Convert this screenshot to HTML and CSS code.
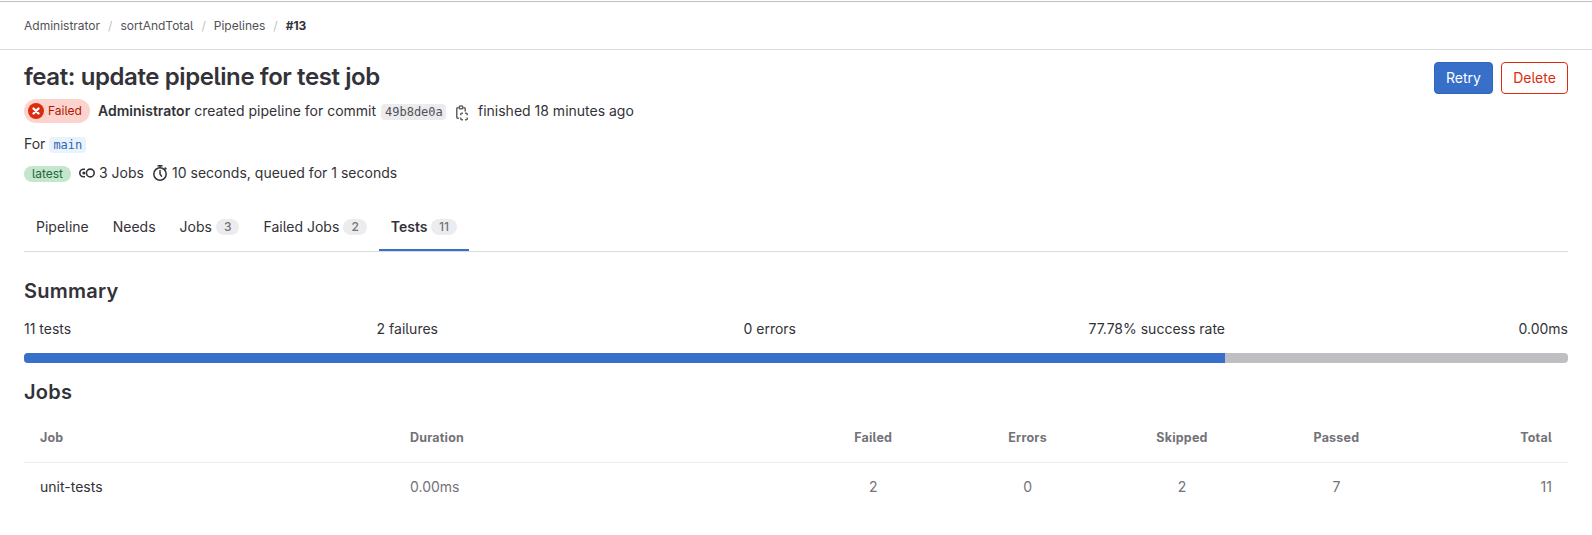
FILE: index.html
```html
<!DOCTYPE html>
<html lang="en">
<head>
<meta charset="utf-8">
<title>Pipeline #13</title>
<link rel="stylesheet" href="styles.css">
</head>
<body>
<nav class="breadcrumbs" aria-label="Breadcrumbs">
  <a class="crumb">Administrator</a><span class="crumb-sep">/</span>
  <a class="crumb">sortAndTotal</a><span class="crumb-sep">/</span>
  <a class="crumb">Pipelines</a><span class="crumb-sep">/</span>
  <a class="crumb crumb-current">#13</a>
</nav>
<main class="page">
  <header class="header">
    <div class="header-info">
      <h1 class="title">feat: update pipeline for test job</h1>
      <div class="line line-status">
        <span class="status"><svg width="16" height="16" viewBox="0 0 16 16"><circle cx="8" cy="8" r="8" fill="#dd2b0e"/><path d="M5.500 5.500l5 5M10.500 5.500l-5 5" stroke="#fff" stroke-width="2.400" stroke-linecap="round"/></svg><span>Failed</span></span>
        <span class="created"><b>Administrator</b> created pipeline for commit</span>
        <code class="sha">49b8de0a</code>
        <svg class="copy" width="16" height="16" viewBox="0 0 16 16" fill="none" stroke="#626168" stroke-width="1.500"><path d="M4.700 2.750H3.750a1 1 0 0 0-1 1v8.500a1 1 0 0 0 1 1H5M9.300 2.750h.950a1 1 0 0 1 1 1V6.500"/><rect x="5.300" y=".9" width="3.400" height="2.800" rx=".8"/><path d="M9 8.250H7.750a1 1 0 0 0-1 1v1M11 8.250h1.250a1 1 0 0 1 1 1v1M6.750 12.500v1.250a1 1 0 0 0 1 1H9M13.250 12.500v1.250a1 1 0 0 1-1 1H11"/></svg>
        <span class="finished">finished 18 minutes ago</span>
      </div>
      <div class="line line-ref"><span>For</span><code class="ref">main</code></div>
      <div class="line line-stats">
        <span class="latest">latest</span>
        <svg class="jobs-icon" width="16" height="16" viewBox="0 0 16 16" fill="none" stroke="#333238" stroke-width="1.600"><path d="M6 4.300H4.500a3.700 3.700 0 0 0 0 7.400H6"/><circle cx="11.300" cy="8" r="3.900"/><circle cx="4.800" cy="8" r="1.500" fill="#333238" stroke="none"/></svg>
        <span class="jobs-count">3 Jobs</span>
        <svg class="timer" width="16" height="16" viewBox="0 0 16 16" fill="none" stroke="#333238" stroke-width="1.500"><circle cx="8" cy="9" r="6.200"/><path d="M8 5.500V9l1.500 2.200" stroke-linecap="round"/><path d="M5.500.800h5M8 .800v2M12.600 2.600l1.800 1.800"/></svg>
        <span class="duration">10 seconds, queued for 1 seconds</span>
      </div>
    </div>
    <div class="actions">
      <button class="btn btn-confirm">Retry</button>
      <button class="btn btn-danger">Delete</button>
    </div>
  </header>
  <div class="tabs" role="tablist">
    <a class="tab">Pipeline</a>
    <a class="tab">Needs</a>
    <a class="tab"><span>Jobs</span><span class="count">3</span></a>
    <a class="tab"><span>Failed Jobs</span><span class="count">2</span></a>
    <a class="tab tab-active"><span>Tests</span><span class="count">11</span></a>
  </div>
  <h2 class="heading heading-summary">Summary</h2>
  <div class="summary">
    <span>11 tests</span><span>2 failures</span><span>0 errors</span><span>77.78% success rate</span><span>0.00ms</span>
  </div>
  <div class="progress"><div class="progress-bar" style="width:77.78%"></div></div>
  <h2 class="heading heading-jobs">Jobs</h2>
  <div class="table">
    <div class="row row-head"><span>Job</span><span>Duration</span><span>Failed</span><span>Errors</span><span>Skipped</span><span>Passed</span><span>Total</span></div>
    <div class="row"><span class="job-name">unit-tests</span><span>0.00ms</span><span>2</span><span>0</span><span>2</span><span>7</span><span>11</span></div>
  </div>
</main>
</body>
</html>
```
FILE: styles.css
```css
* { box-sizing: border-box; }
body { margin: 0; background: #fff; color: #333238; font: 14px/20px Inter, "Liberation Sans", sans-serif; font-feature-settings: "cv05" 1; }
svg { display: block; flex: none; }
.breadcrumbs { display: flex; align-items: center; height: 50px; padding: 2px 24px 0; border-bottom: 1px solid #dcdcde; box-shadow: inset 0 1px #fff, inset 0 2px #bfbfc3; font-size: 12px; line-height: 16px; white-space: nowrap; }
.crumb { color: #535158; }
.crumb-sep { width: 20.4px; text-align: center; color: #bfbfc3; }
.crumb-current { color: #333238; font-weight: 700; letter-spacing: -.1px; }
.page { padding: 0 24px; }
.header { display: flex; justify-content: space-between; }
.header-info { padding-top: 13px; }
.title { margin: 0; font-size: 24px; line-height: 28px; font-weight: 600; letter-spacing: -.41px; white-space: nowrap; }
.line { display: flex; align-items: center; white-space: nowrap; }
.line-status { height: 24px; margin-top: 8px; }
.status { display: flex; align-items: center; gap: 4px; width: 66px; height: 24px; padding: 0 4px; border-radius: 12px; background: #fdd4cd; color: #ae1800; font-size: 12px; }
.created { width: 278px; margin-left: 8px; }
.created b { font-weight: 600; }
code { font: 12px/16px "DejaVu Sans Mono", "Liberation Mono", monospace; height: 16px; border-radius: 4px; padding: 0 4px; }
.sha { width: 65px; margin: 2px 0 0 5px; background: #ececef; color: #535158; }
.copy { margin: 4px 0 0 8px; }
.finished { margin-left: 8px; }
.line-ref { height: 20px; margin-top: 11px; gap: 4px; }
.ref { margin-top: 2px; width: 37px; background: #e9f3fc; color: #2f68b4; }
.line-stats { height: 20px; margin-top: 9px; }
.latest { width: 47px; height: 16px; margin-top: 1px; border-radius: 8px; background: #c3e6cd; color: #24663b; font-size: 12px; line-height: 16px; text-align: center; }
.jobs-icon { margin-left: 8px; }
.jobs-count { width: 44px; margin-left: 4px; }
.timer { margin-left: 9px; }
.duration { margin-left: 4px; letter-spacing: .015px; }
.actions { display: flex; gap: 8px; padding-top: 12px; }
.btn { height: 32px; padding: 0; border-radius: 4px; font: inherit; text-align: center; }
.btn-confirm { width: 59px; border: 1px solid #2f68b4; background: #3870c9; color: #fff; }
.btn-danger { width: 67px; border: 1px solid #dd2b0e; background: #fff; color: #dd2b0e; }
.tabs { display: flex; height: 49px; margin-top: 20px; border-bottom: 1px solid #dcdcde; }
.tab { display: flex; align-items: center; gap: 4px; padding: 0 12px; height: 48px; white-space: nowrap; }
.tab-active { font-weight: 600; box-shadow: inset 0 -2px #3870c9; }
.count { min-width: 23.500px; height: 16px; padding: 0 8px; border-radius: 8px; background: #ececef; color: #737278; font-size: 12px; line-height: 16px; font-weight: 500; text-align: center; }
.tab-active .count { padding: 0 7.6px; }
.heading { margin: 0; font-size: 20px; line-height: 24px; font-weight: 600; letter-spacing: .25px; }
.heading-summary { margin-top: 27px; }
.summary { display: grid; grid-template-columns: 47px 367px 358px 429px 343px; margin-top: 16px; text-align: right; white-space: nowrap; }
.summary span:first-child { text-align: left; }
.progress { height: 10px; margin-top: 14px; border-radius: 4px; background: #bfbfc3; overflow: hidden; }
.progress-bar { height: 100%; background: #3870c9; }
.heading-jobs { margin-top: 17px; }
.row { display: grid; grid-template-columns: 370px 402px repeat(5, 154.4px); height: 48px; align-items: center; color: #737278; text-align: center; }
.row span { padding: 0 16px; }
.row span:nth-child(-n+2) { text-align: left; }
.row span:last-child { text-align: right; }
.row-head { height: 49px; margin-top: 10px; border-bottom: 1px solid #ececef; font-size: 12.500px; letter-spacing: .2px; font-weight: 650; }
.row .job-name { color: #333238; }
```
